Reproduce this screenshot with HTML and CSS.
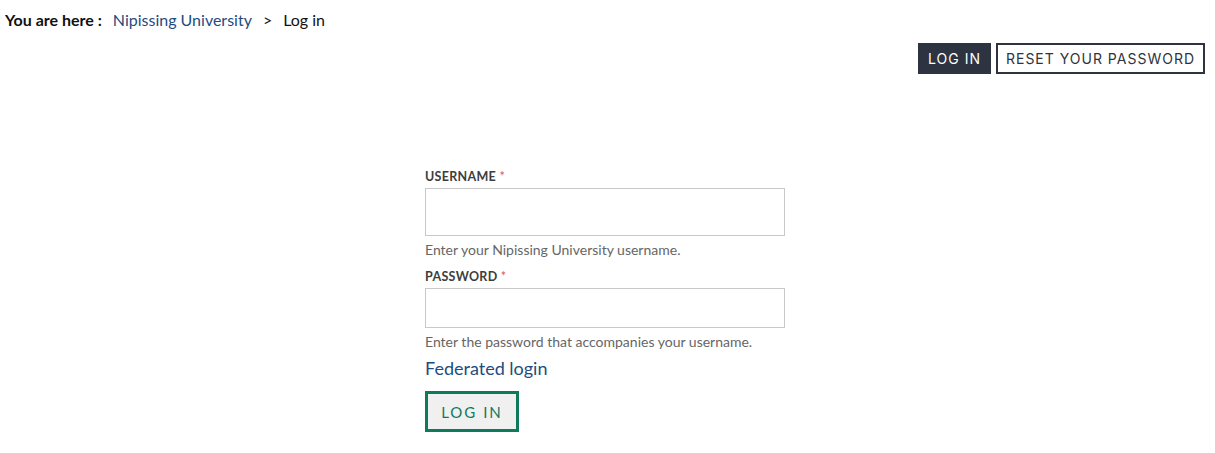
FILE: index.html
```html
<!DOCTYPE html>
<html lang="en">
<head>
<meta charset="utf-8">
<title>Log in | Nipissing University</title>
<link rel="stylesheet" href="styles.css">
</head>
<body>
<nav class="breadcrumb">
  <span class="bc-label">You are here :</span>
  <a class="bc-link" href="#">Nipissing University</a>
  <span class="bc-sep">&gt;</span>
  <span class="bc-current">Log in</span>
</nav>
<div class="tabs">
  <a class="tab tab-active" href="#">LOG IN</a>
  <a class="tab" href="#">RESET YOUR PASSWORD</a>
</div>
<form class="login">
  <div class="field">
    <label class="label">USERNAME <span class="req">*</span></label>
    <input class="input input-user" type="text">
    <div class="desc">Enter your Nipissing University username.</div>
  </div>
  <div class="field">
    <label class="label">PASSWORD <span class="req">*</span></label>
    <input class="input input-pass" type="password">
    <div class="desc">Enter the password that accompanies your username.</div>
  </div>
  <a class="federated" href="#">Federated login</a>
  <button class="submit" type="button">LOG IN</button>
</form>
</body>
</html>
```
FILE: styles.css
```css
html, body {
  margin: 0;
  padding: 0;
  background: #fff;
}
body {
  font-family: "Lato", "Noto Sans", sans-serif;
  color: #222;
}
.breadcrumb {
  display: flex;
  align-items: baseline;
  padding: 8px 0 0 5px;
  height: 24px;
  font-size: 16px;
  line-height: 23px;
}
.bc-label {
  font-weight: 700;
  color: #111;
  margin-right: 11px;
}
.bc-link {
  color: #1d4d80;
  text-decoration: none;
}
.bc-sep {
  margin: 0 11px 0 11px;
  color: #111;
}
.bc-current {
  color: #111;
}
.tabs {
  display: flex;
  justify-content: flex-end;
  gap: 5px;
  padding: 11px 10px 0 0;
}
.tab {
  font-family: "Inter", "Liberation Sans", sans-serif;
  font-size: 14px;
  letter-spacing: 1px;
  line-height: 27px;
  padding: 0 8px;
  border: 2px solid #2d3340;
  color: #2d3340;
  text-decoration: none;
  background: #fff;
}
.tab-active {
  background: #2d3340;
  color: #fff;
}
.login {
  width: 365px;
  margin: 95px auto 0;
  display: flex;
  flex-direction: column;
  align-items: flex-start;
}
.field {
  width: 360px;
  display: flex;
  flex-direction: column;
  margin-bottom: 10px;
}
.label {
  font-size: 12.5px;
  font-weight: 700;
  color: #3d3d3d;
  line-height: 16px;
  margin-bottom: 3px;
  letter-spacing: 0.3px;
}
.req {
  color: #e0524e;
  font-weight: 400;
}
.input {
  box-sizing: border-box;
  width: 360px;
  border: 1px solid #c8c8c8;
  margin: 0;
  padding: 0 8px;
  font-size: 15px;
}
.input-user { height: 48px; }
.input-pass { height: 40px; }
.desc {
  font-size: 14px;
  color: #666;
  line-height: 18px;
  margin-top: 5px;
}
.federated {
  margin-top: -5px;
  font-size: 18px;
  line-height: 24px;
  color: #1d4d80;
  text-decoration: none;
}
.submit {
  margin-top: 11px;
  width: 94px;
  height: 41px;
  border: 3px solid #0d7a5c;
  background: #f0f0f0;
  color: #0d7a5c;
  font-family: "Lato", sans-serif;
  font-size: 15px;
  letter-spacing: 2px;
  padding: 0;
  cursor: pointer;
}
```
